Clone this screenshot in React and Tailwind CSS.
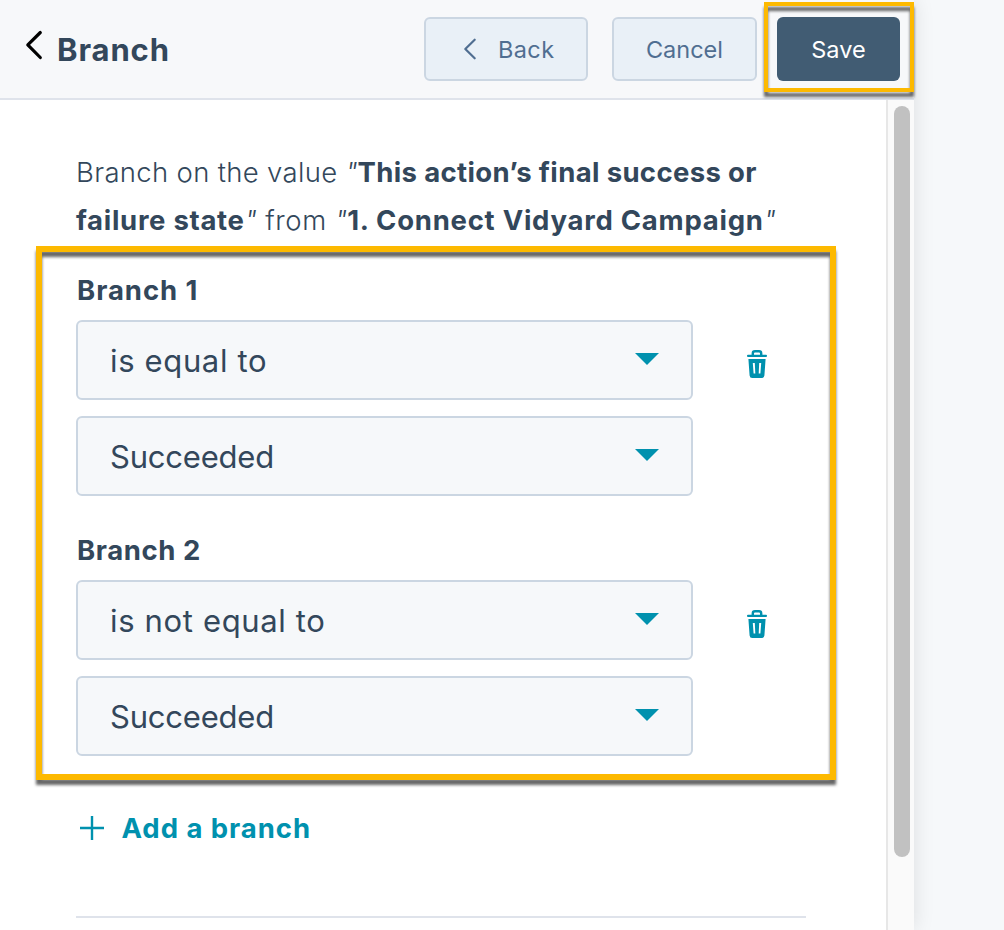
function Caret() {
  return (
    <svg width="24" height="12" viewBox="0 0 24 12" className="block shrink-0 -translate-y-px">
      <path d="M0 0H24L12 12Z" fill="#0091ae" />
    </svg>
  );
}

function Trash() {
  return (
    <svg width="20" height="28" viewBox="0 0 20 28" className="block">
      <path d="M5.8 5V3.4Q5.8 1.3 8 1.3H12Q14.2 1.3 14.2 3.4V5" fill="none" stroke="#0091ae" strokeWidth="2.4" />
      <rect x="0" y="4.7" width="20" height="2.4" rx="1" fill="#0091ae" />
      <path
        fillRule="evenodd"
        d="M1.4 9H18.6L17.4 25.5Q17.2 28 14.8 28H5.2Q2.8 28 2.6 25.5ZM5.8 13L6.6 23.6H8.3L7.8 13ZM12.2 13L11.7 23.6H13.4L14.2 13Z"
        fill="#0091ae"
      />
    </svg>
  );
}

function Select({ children, tracking }) {
  return (
    <div className="flex h-20 w-[617px] items-center justify-between rounded-[6px] border-2 border-[#cbd6e2] bg-[#f6f8fa] pr-8 pl-8">
      <span className={`pt-0.5 text-[31px] leading-10 font-normal whitespace-nowrap ${tracking}`}>{children}</span>
      <Caret />
    </div>
  );
}

function Branch({ title, operator, titleTracking }) {
  return (
    <section>
      <h2 className={`h-[50px] pl-px text-[27.5px] leading-[40px] font-bold ${titleTracking}`}>{title}</h2>
      <div className="flex items-start">
        <div className="flex flex-col gap-4">
          <Select tracking="tracking-[0.65px]">{operator}</Select>
          <Select tracking="tracking-[-0.2px]">Succeeded</Select>
        </div>
        <button className="mt-[30px] ml-[54px]" aria-label="Delete branch">
          <Trash />
        </button>
      </div>
    </section>
  );
}

export default function App() {
  return (
    <div className="flex h-[930px] w-[1004px] overflow-hidden bg-[#f6f8fa] font-['Inter','Liberation_Sans',sans-serif] text-[#33475b]">
      <div className="flex w-[914px] shrink-0 flex-col bg-white shadow-[0_0_20px_rgba(0,0,0,0.11)]">
        <header className="flex h-[100px] shrink-0 items-start border-b-2 border-[#dfe3eb] bg-[#f7f8fa]">
          <svg width="18" height="30" viewBox="0 0 18 30" className="mt-[30px] ml-[25px] shrink-0">
            <path d="M15.3 2.5L2.8 14.8L15.3 27.5" fill="none" stroke="#000" strokeWidth="3.2" strokeLinecap="round" strokeLinejoin="round" />
          </svg>
          <h1 className="mt-[30px] ml-[14px] w-[367px] text-[31px] leading-10 font-bold tracking-[0.9px]">Branch</h1>
          <button className="mt-[17px] flex h-16 w-[164px] shrink-0 items-center rounded-[6px] border-2 border-[#cbd6e2] bg-[#e9f0f7] pl-[37px] text-[#506e91]">
            <svg width="14" height="22" viewBox="0 0 14 22" className="mr-[21px]">
              <path d="M11.7 1.7L2.3 11L11.7 20.3" fill="none" stroke="#506e91" strokeWidth="2.2" strokeLinecap="round" strokeLinejoin="round" />
            </svg>
            <span className="pt-0.5 text-[23.5px] leading-8 tracking-[0.4px]">Back</span>
          </button>
          <button className="mt-[17px] ml-6 h-16 w-[145px] shrink-0 rounded-[6px] border-2 border-[#cbd6e2] bg-[#e9f0f7] pt-0.5 text-[23.5px] leading-8 text-[#506e91]">
            Cancel
          </button>
          <div className="relative mt-[17px] ml-5">
            <button className="block h-16 w-[123px] rounded-[6px] bg-[#415c73] pt-0.5 text-[23.5px] leading-8 text-white">Save</button>
            <div className="pointer-events-none absolute -top-[15px] -left-[13px] h-[90px] w-[150px] border-4 border-[#fdb900] drop-shadow-[0_5px_1.5px_rgba(0,0,0,0.6)]" />
          </div>
        </header>
        <div className="flex min-h-0 flex-1">
          <main className="w-[886px] shrink-0 pt-12 pl-[76px]">
            <p className="h-24 text-[27.5px] leading-[48px] whitespace-nowrap">
              <span className="font-light tracking-[0.32px]">Branch on the value </span>
              <span className="font-light italic">"</span>
              <b className="tracking-[0.35px]">This action’s final success or</b>
              <br />
              <b className="tracking-[0.7px]">failure state</b>
              <span className="font-light italic">"</span>
              <span className="font-light tracking-[0.6px]"> from </span>
              <span className="font-light italic">"</span>
              <b className="tracking-[0.74px]">1. Connect Vidyard Campaign</b>
              <span className="font-light italic">"</span>
            </p>
            <div className="relative mt-[26px] flex flex-col gap-[34px]">
              <Branch title="Branch 1" operator="is equal to" titleTracking="tracking-[0.95px]" />
              <Branch title="Branch 2" operator="is not equal to" titleTracking="tracking-[0.6px]" />
              <div className="pointer-events-none absolute -top-6 -left-10 h-[534px] w-[800px] border-[6px] border-[#fdb900] drop-shadow-[0_5px_1.5px_rgba(0,0,0,0.6)]" />
            </div>
            <button className="mt-[52px] ml-1 flex h-10 items-center text-[27.5px] leading-10 font-bold text-[#0091ae]">
              <svg width="24" height="24" viewBox="0 0 24 24" className="mr-[17.5px]">
                <path d="M12 0V24M0 12H24" stroke="#0091ae" strokeWidth="2.4" />
              </svg>
              <span className="tracking-[0.95px]">Add a branch</span>
            </button>
            <hr className="mt-[68px] w-[730px] border-t-2 border-[#dfe3eb]" />
          </main>
          <div className="w-7 border-l-2 border-[#e7e7e7] bg-[#fafafa] pt-[6px] pl-[6px]">
            <div className="h-[751px] w-4 rounded-full bg-[#c1c1c1]" />
          </div>
        </div>
      </div>
    </div>
  );
}
